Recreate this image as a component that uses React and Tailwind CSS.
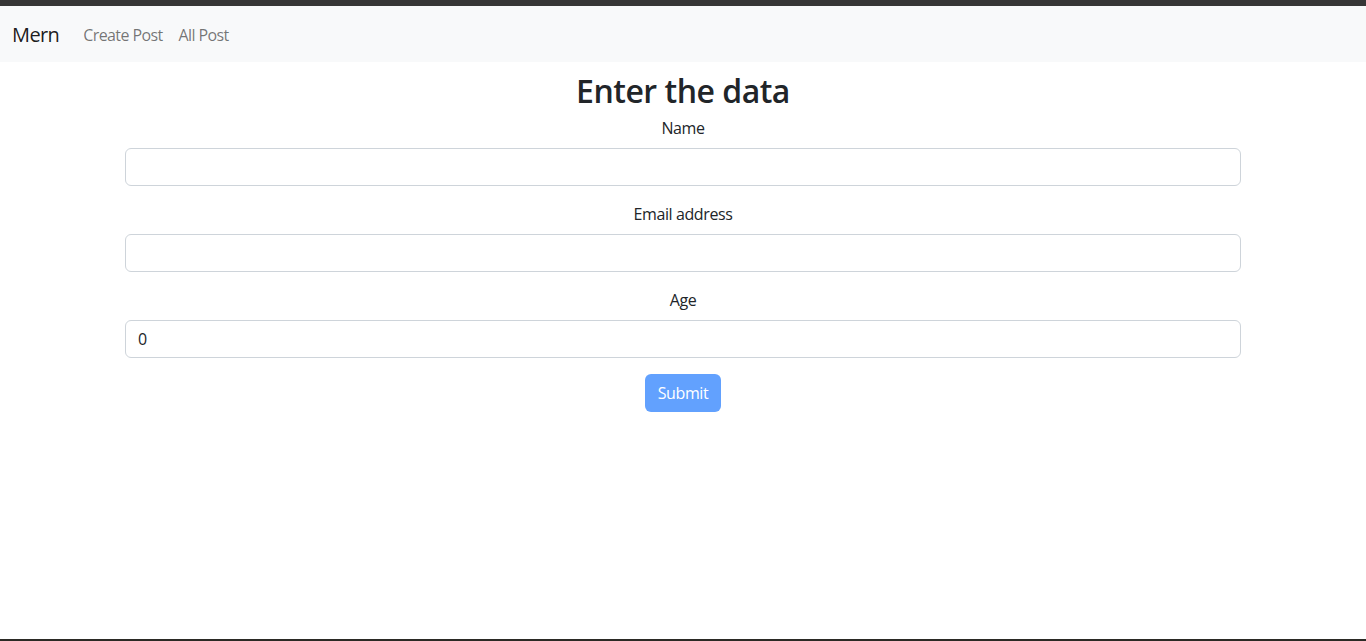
import { useState } from 'react'

export default function App() {
  const [name, setName] = useState('')
  const [email, setEmail] = useState('')
  const [age, setAge] = useState(0)

  return (
    <div
      className="h-screen flex flex-col bg-white text-[#212529] border-b-2 border-[#2b2a25]"
      style={{ fontFamily: '"Open Sans", "Noto Sans", sans-serif' }}
    >
      <div className="h-[6px] bg-[#363636]" />

      <nav className="h-[56px] bg-[#f8f9fa] flex items-center px-3 pt-[2px]">
        <a href="#" className="text-xl text-black/90 mr-4 tracking-[-0.6px]">Mern</a>
        <a href="#" className="px-2 text-base text-black/55 tracking-[-0.6px]">Create Post</a>
        <a href="#" className="px-2 text-base text-black/55 tracking-[-0.6px]">All Post</a>
      </nav>

      <div className="w-[1116px] mx-auto mt-[10px]">
        <h2 className="text-[32px] leading-[38px] font-semibold text-center mb-[6px] tracking-[-0.5px]">Enter the data</h2>
        <form className="flex flex-col" onSubmit={(e) => e.preventDefault()}>
          <div className="mb-4">
            <label className="block text-center text-base leading-6 mb-2 tracking-[-0.4px]">Name</label>
            <input
              type="text"
              value={name}
              onChange={(e) => setName(e.target.value)}
              className="w-full h-[38px] px-3 border border-[#ced4da] rounded-[6px] outline-none text-base"
            />
          </div>
          <div className="mb-4">
            <label className="block text-center text-base leading-6 mb-2 tracking-[-0.4px]">Email address</label>
            <input
              type="email"
              value={email}
              onChange={(e) => setEmail(e.target.value)}
              className="w-full h-[38px] px-3 border border-[#ced4da] rounded-[6px] outline-none text-base"
            />
          </div>
          <div className="mb-4">
            <label className="block text-center text-base leading-6 mb-2 tracking-[-0.4px]">Age</label>
            <input
              type="number"
              value={age}
              onChange={(e) => setAge(e.target.value)}
              className="w-full h-[38px] px-3 border border-[#ced4da] rounded-[6px] outline-none text-base"
            />
          </div>
          <div className="flex justify-center">
            <button
              type="submit"
              disabled
              className="h-[38px] w-[76px] bg-[#62a1fe] text-white rounded-[6px] text-base tracking-[-0.4px]"
            >
              Submit
            </button>
          </div>
        </form>
      </div>
    </div>
  )
}
